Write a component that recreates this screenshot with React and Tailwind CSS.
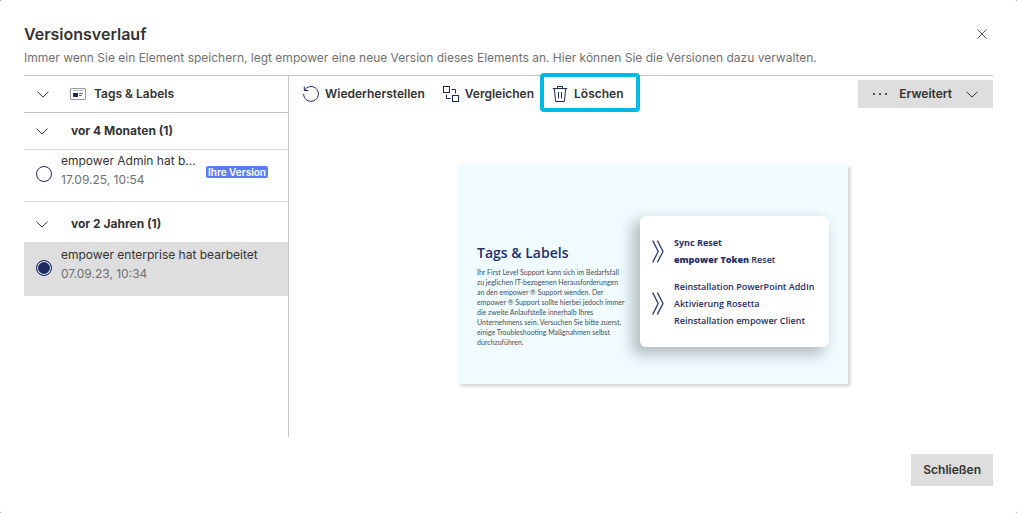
import React, { useState } from 'react';

function ChevronDown({ className = '' }) {
  return (
    <svg className={`w-3 h-[7px] flex-shrink-0 ${className}`} viewBox="0 0 12 7" fill="none" stroke="currentColor" aria-hidden="true">
      <path d="M0.5 0.6 L6 6.1 L11.5 0.6" />
    </svg>
  );
}

function RestoreIcon() {
  return (
    <svg className="w-4 h-4 flex-shrink-0 text-[#1b2a63]" viewBox="0 0 16 16" fill="none" stroke="currentColor" aria-hidden="true">
      <path d="M1.3 0.4 V4.5 H5.4" />
      <path d="M1.5 4.4 A7.4 7.4 0 1 1 0.6 8" />
    </svg>
  );
}

function CompareIcon() {
  return (
    <svg className="w-4 h-4 flex-shrink-0 text-[#1b2a63]" viewBox="0 0 16 16" fill="none" stroke="currentColor" aria-hidden="true">
      <rect x="0.5" y="0.5" width="6" height="6" />
      <rect x="9.5" y="9.5" width="6" height="6" />
      <path d="M8.5 3.5 H12.5 V7.5 M3.5 8.5 V12.5 H7.5" />
    </svg>
  );
}

function TrashIcon() {
  return (
    <svg className="w-4 h-4 flex-shrink-0 text-[#1b2a63]" viewBox="0 0 16 16" fill="none" stroke="currentColor" aria-hidden="true">
      <path d="M0.8 2.5 H15.2 M5.5 2.3 V0.5 H10.5 V2.3" />
      <path d="M2.3 2.5 L3.6 15.5 H12.4 L13.7 2.5" />
      <path d="M6.5 6 V12.5 M9.5 6 V12.5" />
    </svg>
  );
}

function SlideIcon() {
  return (
    <svg className="w-4 h-3 flex-shrink-0" viewBox="0 0 16 12" fill="none" aria-hidden="true">
      <rect x="0.5" y="0.5" width="15" height="11" rx="0.5" stroke="#9a9ba1" />
      <path d="M3 2.5 H13" stroke="#b4b8c8" />
      <rect x="3" y="5" width="5" height="4" fill="#1b2a63" />
      <path d="M9 5.5 H13 M9 7.5 H12" stroke="#6673a0" />
    </svg>
  );
}

function DoubleChevron() {
  return (
    <svg className="w-3 h-[23px] flex-shrink-0 text-[#2b3c78]" viewBox="0 0 12 23" fill="none" stroke="currentColor" strokeWidth="1.3" aria-hidden="true">
      <path d="M0.7 0.6 L6.2 11.5 L0.7 22.4 M5.4 0.6 L11 11.5 L5.4 22.4" />
    </svg>
  );
}

function ToolbarButton({ icon, label, highlighted }) {
  return (
    <button type="button" className="relative flex items-center gap-1.5 h-7 font-semibold whitespace-nowrap">
      {icon}
      {label}
      {highlighted && (
        <span className="absolute -left-3 -right-4 -top-[7px] -bottom-1 border-4 border-[#00b9e4] rounded-[4px]" />
      )}
    </button>
  );
}

function VersionGroup({ title, children }) {
  const [open, setOpen] = useState(true);

  return (
    <section>
      <h3>
        <button
          type="button"
          className="flex items-center gap-[23px] w-full h-9 pl-3 font-bold text-left"
          aria-expanded={open}
          onClick={() => setOpen(!open)}
        >
          <ChevronDown />
          {title}
        </button>
      </h3>
      {open && children}
    </section>
  );
}

function VersionItem({ version, selected, onSelect }) {
  return (
    <label className={`flex items-center pl-3 pr-5 pb-[3px] border-[#dcdcdc] ${selected ? 'h-[54px] bg-[#dedede]' : 'h-[53px] border-y'}`}>
      <input
        type="radio"
        name="version"
        checked={selected}
        onChange={() => onSelect(version.id)}
        className="appearance-none w-4 h-4 mr-[9px] flex-shrink-0 rounded-full border border-[#1b2a63] bg-white checked:bg-[#1b2a63] checked:shadow-[inset_0_0_0_1px_#ffffff]"
      />
      <span className="flex flex-col pb-2 leading-[19px] whitespace-nowrap">
        <span>{version.text}</span>
        <span className="text-[#707070]">{version.date}</span>
      </span>
      {version.own && (
        <span className="ml-auto mb-1 px-0.5 rounded-[2px] bg-[#5c7cfa] text-white text-[10px] leading-3 font-semibold whitespace-nowrap">
          Ihre Version
        </span>
      )}
    </label>
  );
}

function SlidePreview() {
  return (
    <article className="flex items-center w-[390px] h-[219px] px-[19px] bg-[#effbff] shadow-[2px_2px_4px_rgba(0,0,0,0.2)] font-['Open_Sans','Noto_Sans',sans-serif] text-[#1f2f6b]">
      <div className="w-[163px] flex-shrink-0 pt-10">
        <h2 className="text-[14px] leading-5 font-semibold">Tags &amp; Labels</h2>
        <p className="mt-1 font-['Lato','Open_Sans',sans-serif] text-[7px] leading-[10px] text-[#4a4f55] whitespace-nowrap">
          Ihr First Level Support kann sich im Bedarfsfall<br />
          zu jeglichen IT-bezogenen Herausforderungen<br />
          an den empower ® Support wenden. Der<br />
          empower ® Support sollte hierbei jedoch immer<br />
          die zweite Anlaufstelle innerhalb Ihres<br />
          Unternehmens sein. Versuchen Sie bitte zuerst,<br />
          einige Troubleshooting Maßgnahmen selbst<br />
          durchzuführen.
        </p>
      </div>
      <div className="flex flex-col justify-center gap-2.5 flex-1 min-w-0 h-[131px] mt-3.5 pl-3 rounded-md bg-white shadow-[-6px_6px_14px_2px_rgba(0,0,0,0.24)] text-[9px] leading-[17px] font-semibold whitespace-nowrap">
        <div className="flex items-center gap-2.5">
          <DoubleChevron />
          <ul>
            <li className="font-bold">Sync Reset</li>
            <li><b>empower Token</b> Reset</li>
          </ul>
        </div>
        <div className="flex items-center gap-2.5">
          <DoubleChevron />
          <ul>
            <li>Reinstallation PowerPoint AddIn</li>
            <li>Aktivierung Rosetta</li>
            <li>Reinstallation empower Client</li>
          </ul>
        </div>
      </div>
    </article>
  );
}

const groups = [
  {
    title: 'vor 4 Monaten (1)',
    versions: [{ id: 2, text: 'empower Admin hat b...', date: '17.09.25, 10:54', own: true }],
  },
  {
    title: 'vor 2 Jahren (1)',
    versions: [{ id: 1, text: 'empower enterprise hat bearbeitet', date: '07.09.23, 10:34' }],
  },
];

function App() {
  const [selectedId, setSelectedId] = useState(1);

  return (
    <div className="min-h-screen flex bg-[#8d8d9c]">
      <div
        role="dialog"
        aria-labelledby="dialog-title"
        className="flex flex-col flex-1 px-6 rounded-[2px] bg-white font-['Inter',sans-serif] text-[12px] leading-4 text-[#333333]"
      >
        <header className="flex items-start justify-between h-[75px] pt-6">
          <div>
            <h1 id="dialog-title" className="text-[16px] leading-5 font-semibold">Versionsverlauf</h1>
            <p className="mt-1.5 text-[#707070]">
              Immer wenn Sie ein Element speichern, legt empower eine neue Version dieses Elements an. Hier können Sie die Versionen dazu verwalten.
            </p>
          </div>
          <button type="button" aria-label="Dialog schließen" className="mt-[5px] mr-1.5">
            <svg className="w-[10px] h-[10px]" viewBox="0 0 10 10" stroke="#555555" aria-hidden="true">
              <path d="M0.4 0.4 L9.6 9.6 M9.6 0.4 L0.4 9.6" />
            </svg>
          </button>
        </header>

        <div className="flex flex-1 border-t border-[#c8c8c8]">
          <aside className="w-[265px] flex-shrink-0 border-r border-[#c8c8c8]">
            <button type="button" className="flex items-center w-full h-[37px] pl-[13px] border-b border-[#c8c8c8] font-semibold">
              <ChevronDown />
              <span className="flex items-center gap-2 ml-[21px]">
                <SlideIcon />
                Tags &amp; Labels
              </span>
            </button>
            <div className="flex flex-col gap-1">
              {groups.map((group) => (
                <VersionGroup key={group.title} title={group.title}>
                  {group.versions.map((version) => (
                    <VersionItem
                      key={version.id}
                      version={version}
                      selected={version.id === selectedId}
                      onSelect={setSelectedId}
                    />
                  ))}
                </VersionGroup>
              ))}
            </div>
          </aside>

          <main className="flex flex-col flex-1 min-w-0">
            <div className="flex items-center justify-between h-9 pl-3.5">
              <div className="flex items-center gap-[18px]">
                <ToolbarButton icon={<RestoreIcon />} label="Wiederherstellen" />
                <ToolbarButton icon={<CompareIcon />} label="Vergleichen" />
                <ToolbarButton icon={<TrashIcon />} label="Löschen" highlighted />
              </div>
              <button type="button" className="flex items-center h-7 px-[15px] bg-[#dedede] font-semibold">
                <svg className="w-[14px] h-[2px] mr-3 text-[#555555]" viewBox="0 0 14 2" fill="currentColor" aria-hidden="true">
                  <path d="M0 0 H2 V2 H0 Z M6 0 H8 V2 H6 Z M12 0 H14 V2 H12 Z" />
                </svg>
                Erweitert
                <ChevronDown className="ml-3.5" />
              </button>
            </div>
            <div className="flex flex-1 items-center justify-center pl-6">
              <SlidePreview />
            </div>
          </main>
        </div>

        <footer className="flex items-start justify-end h-[76px] pt-[17px]">
          <button type="button" className="h-8 px-3 bg-[#dedede] font-semibold">Schließen</button>
        </footer>
      </div>
    </div>
  );
}

export default App;
